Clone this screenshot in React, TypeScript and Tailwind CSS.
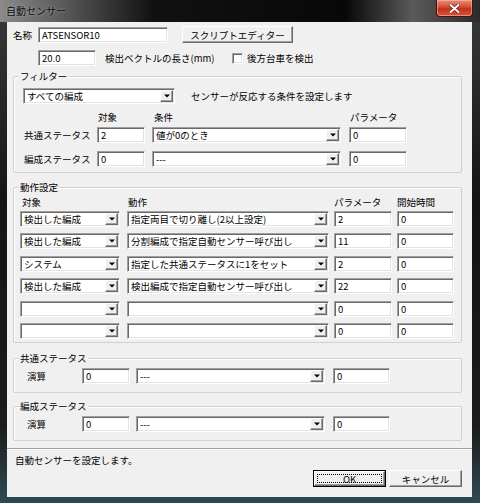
import React from "react";

const sunken =
  "border border-t-[#a0a0a0] border-l-[#a0a0a0] border-b-white border-r-white shadow-[inset_1px_1px_0_#696969,inset_-1px_-1px_0_#e3e3e3] bg-white";
const raised =
  "border border-t-white border-l-white border-b-[#696969] border-r-[#696969] shadow-[inset_-1px_-1px_0_#a0a0a0] bg-[#f0f0f0]";

function TextBox({ className, value }: { className: string; value: string }) {
  return (
    <div className={`${sunken} ${className} h-[16px] flex items-center pl-[3px] shrink-0`}>
      <span className="leading-[12px]">{value}</span>
    </div>
  );
}

function Combo({ className, value }: { className: string; value: string }) {
  return (
    <div className={`${sunken} ${className} h-[16px] flex items-stretch p-[1px] shrink-0`}>
      <div className="flex-1 flex items-center pl-[2px] overflow-hidden whitespace-nowrap">
        <span className="leading-[12px]">{value}</span>
      </div>
      <div className={`${raised} w-[13px] flex items-center justify-center`}>
        <svg width="6" height="4" viewBox="0 0 6 4">
          <path d="M0 0.5 H6 L3 3.5 Z" fill="#000" />
        </svg>
      </div>
    </div>
  );
}

function Group({
  title,
  className,
  children,
}: {
  title: string;
  className: string;
  children?: React.ReactNode;
}) {
  return (
    <div
      className={`relative ml-[6px] w-[449px] border border-[#d0d0d0] rounded-[2px] shadow-[inset_1px_1px_0_#ffffff] shrink-0 ${className}`}
    >
      <div className="absolute left-[5px] top-[-7px] px-[1px] bg-[#f0f0f0] leading-[12px]">{title}</div>
      {children}
    </div>
  );
}

const actionRows = [
  { t: "検出した編成", a: "指定両目で切り離し(2以上設定)", p: "2", s: "0" },
  { t: "検出した編成", a: "分割編成で指定自動センサー呼び出し", p: "11", s: "0" },
  { t: "システム", a: "指定した共通ステータスに1をセット", p: "2", s: "0" },
  { t: "検出した編成", a: "検出編成で指定自動センサー呼び出し", p: "22", s: "0" },
  { t: "", a: "", p: "0", s: "0" },
  { t: "", a: "", p: "0", s: "0" },
];

export default function App() {
  return (
    <div className="w-[480px] h-[503px] flex flex-col bg-[linear-gradient(to_bottom,#3a3a3a,#141414_40%,#1c1c1c_85%,#2f4a55)] font-['Noto_Sans_CJK_JP','Noto_Sans',sans-serif] text-[9.5px] text-black overflow-hidden">
      {/* title bar */}
      <div className="h-[22px] flex items-start bg-[linear-gradient(to_right,#8a8a8a_0%,#5e5e5e_12%,#111111_32%,#080808_72%,#5a5a5a_86%,#2a2a2a_100%)]">
        <div className="ml-[6px] mt-[5px] text-[10px] leading-[12px] text-[#0a0a0a] [text-shadow:0_0_3px_rgba(255,255,255,0.55)]">
          自動センサー
        </div>
        <div className="flex-1" />
        <div className="mr-[7px] w-[37px] h-[17px] rounded-b-[4px] border border-t-0 border-[#4a1208] bg-[linear-gradient(to_bottom,#e8907c,#d34a33_45%,#c1301c_55%,#d8553a)] flex items-center justify-center shadow-[inset_0_0_0_1px_rgba(255,200,180,0.5)]">
          <svg width="11" height="9" viewBox="0 0 11 9">
            <path d="M1.5 1 L9.5 8 M9.5 1 L1.5 8" stroke="#5a1a10" strokeWidth="3.2" strokeLinecap="round" />
            <path d="M1.5 1 L9.5 8 M9.5 1 L1.5 8" stroke="#ffffff" strokeWidth="2" strokeLinecap="round" />
          </svg>
        </div>
      </div>

      {/* client */}
      <div className="ml-[7px] w-[465px] h-[475px] bg-[#f0f0f0] flex flex-col">
        {/* row 1 */}
        <div className="mt-[4px] h-[17px] flex items-center pl-[6px]">
          <div className="w-[25px] leading-[12px]">名称</div>
          <TextBox className="w-[130px]" value="ATSENSOR10" />
          <div className={`${raised} ml-[14px] w-[111px] h-[17px] flex items-center justify-center leading-[12px]`}>
            スクリプトエディター
          </div>
        </div>
        {/* row 2 */}
        <div className="mt-[7px] h-[16px] flex items-center pl-[31px]">
          <TextBox className="w-[58px]" value="20.0" />
          <div className="ml-[9px] w-[127px] leading-[12px] whitespace-nowrap">検出ベクトルの長さ(mm)</div>
          <div className={`${sunken} w-[11px] h-[11px] shrink-0`} />
          <div className="ml-[4px] leading-[12px]">後方台車を検出</div>
        </div>

        {/* filter */}
        <Group title="フィルター" className="mt-[10px] h-[97px]">
          <div className="flex flex-col pt-[11px]">
            <div className="flex items-center pl-[9px] h-[16px]">
              <Combo className="w-[152px]" value="すべての編成" />
              <div className="ml-[16px] leading-[12px]">センサーが反応する条件を設定します</div>
            </div>
            <div className="mt-[7px] flex pl-[10px] h-[12px] leading-[12px]">
              <div className="w-[73px]" />
              <div className="w-[48px] pl-[1px]">対象</div>
              <div className="ml-[7px] w-[189px] pl-[2px]">条件</div>
              <div className="ml-[8px] pl-[1px]">パラメータ</div>
            </div>
            <div className="mt-[4px] flex items-center pl-[10px] h-[16px]">
              <div className="w-[73px] leading-[12px]">共通ステータス</div>
              <TextBox className="w-[48px]" value="2" />
              <Combo className="ml-[7px] w-[189px]" value="値が0のとき" />
              <TextBox className="ml-[8px] w-[58px]" value="0" />
            </div>
            <div className="mt-[8px] flex items-center pl-[10px] h-[16px]">
              <div className="w-[73px] leading-[12px]">編成ステータス</div>
              <TextBox className="w-[48px]" value="0" />
              <Combo className="ml-[7px] w-[189px]" value="---" />
              <TextBox className="ml-[8px] w-[58px]" value="0" />
            </div>
          </div>
        </Group>

        {/* actions */}
        <Group title="動作設定" className="mt-[14px] h-[156px]">
          <div className="flex flex-col pt-[8px]">
            <div className="flex h-[12px] leading-[12px]">
              <div className="ml-[8px] w-[106px]">対象</div>
              <div className="w-[206px]">動作</div>
              <div className="w-[63px]">パラメータ</div>
              <div>開始時間</div>
            </div>
            <div className="mt-[3px] flex flex-col gap-[6.4px]">
              {actionRows.map((r, i) => (
                <div key={i} className="flex items-center pl-[6px] h-[16px]">
                  <Combo className="w-[100px]" value={r.t} />
                  <Combo className="ml-[7px] w-[202px]" value={r.a} />
                  <TextBox className="ml-[5px] w-[58px]" value={r.p} />
                  <TextBox className="ml-[5px] w-[57px]" value={r.s} />
                </div>
              ))}
            </div>
          </div>
        </Group>

        {/* common status */}
        <Group title="共通ステータス" className="mt-[15px] h-[35px]">
          <div className="mt-[9px] flex items-center pl-[13px] h-[16px]">
            <div className="w-[55px] leading-[12px]">演算</div>
            <TextBox className="w-[48px]" value="0" />
            <Combo className="ml-[6px] w-[189px]" value="---" />
            <TextBox className="ml-[8px] w-[57px]" value="0" />
          </div>
        </Group>

        {/* formation status */}
        <Group title="編成ステータス" className="mt-[13px] h-[35px]">
          <div className="mt-[9px] flex items-center pl-[13px] h-[16px]">
            <div className="w-[55px] leading-[12px]">演算</div>
            <TextBox className="w-[48px]" value="0" />
            <Combo className="ml-[6px] w-[189px]" value="---" />
            <TextBox className="ml-[8px] w-[57px]" value="0" />
          </div>
        </Group>

        {/* separator */}
        <div className="mt-[7px] h-[2px] border-t border-t-[#a0a0a0] border-b border-b-white" />

        <div className="mt-[4px] pl-[8px] h-[12px] leading-[12px]">自動センサーを設定します。</div>

        <div className="mt-[4px] flex justify-end pr-[10px] gap-[3px]">
          <div className="w-[73px] h-[17px] border border-black flex">
            <div className={`${raised} flex-1 flex p-[2px]`}>
              <div className="flex-1 border border-dotted border-black flex items-center justify-center leading-[12px]">
                OK
              </div>
            </div>
          </div>
          <div className={`${raised} w-[73px] h-[17px] flex items-center justify-center leading-[12px]`}>
            キャンセル
          </div>
        </div>
      </div>
    </div>
  );
}
